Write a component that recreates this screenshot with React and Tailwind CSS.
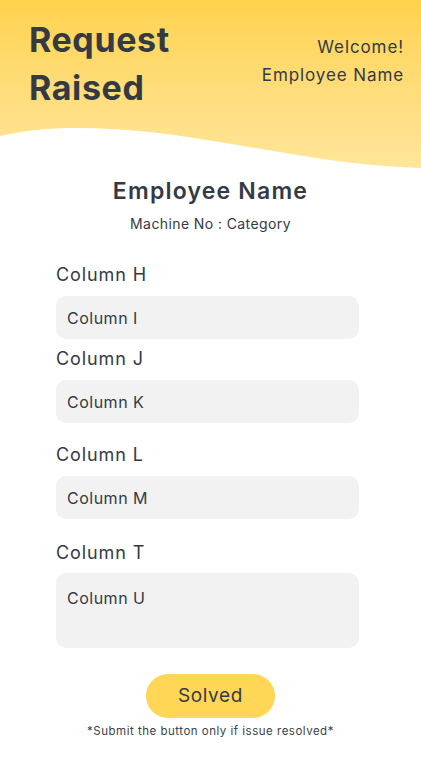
import React from 'react';

const fields = [
    { label: 'Column H', value: 'Column I', mt: 'mt-[28px]' },
    { label: 'Column J', value: 'Column K', mt: 'mt-[7px]' },
    { label: 'Column L', value: 'Column M', mt: 'mt-[19px]' },
];

const App = () => {
    return (
        <div className="min-h-screen w-full bg-white text-[#343a44]" style={{ fontFamily: 'Inter, "Noto Sans", sans-serif' }}>
            {/* Header */}
            <div className="relative h-[170px] bg-gradient-to-b from-[#ffd24c] to-[#ffe69b] overflow-hidden">
                <div className="flex justify-between items-start px-[29px] pt-[16px] pr-[17px]">
                    <h1 className="text-[34px] font-bold leading-[48px] tracking-[0.6px]">
                        Request<br />Raised
                    </h1>
                    <div className="text-right text-[17px] leading-[28px] mt-[17px] tracking-[0.9px]">
                        <p>Welcome!</p>
                        <p>Employee Name</p>
                    </div>
                </div>
                {/* wave */}
                <svg className="absolute bottom-0 left-0 w-full h-[50px]" viewBox="0 0 421 50" preserveAspectRatio="none">
                    <path d="M0 16 C 40 6, 90 6, 150 12 C 250 24, 330 46, 421 48 L421 50 L0 50 Z" fill="#ffffff" />
                </svg>
            </div>

            {/* Content */}
            <div className="flex flex-col items-center mt-[6px]">
                <h2 className="text-[23px] font-semibold leading-[30px] tracking-[1.2px]">Employee Name</h2>
                <p className="text-[14px] leading-[20px] mt-[8px] tracking-[0.4px]">Machine No : Category</p>
            </div>

            <div className="px-[56px] pr-[62px]">
                {fields.map((f) => (
                    <div key={f.label} className={f.mt}>
                        <p className="text-[18px] leading-[26px] tracking-[0.9px]">{f.label}</p>
                        <div className="mt-[8px] h-[43px] rounded-[10px] bg-[#f2f2f2] flex items-center px-[11px] text-[16px] tracking-[0.5px]">
                            {f.value}
                        </div>
                    </div>
                ))}
                <div className="mt-[21px]">
                    <p className="text-[18px] leading-[26px] tracking-[0.9px]">Column T</p>
                    <div className="mt-[7px] h-[75px] rounded-[10px] bg-[#f2f2f2] px-[11px] pt-[13px] text-[16px] tracking-[0.5px]">
                        Column U
                    </div>
                </div>
            </div>

            <div className="flex flex-col items-center mt-[26px]">
                <button className="w-[129px] h-[44px] rounded-full bg-[#ffd656] text-[19px] tracking-[0.6px]">Solved</button>
                <p className="text-[11.5px] leading-[16px] mt-[5px] text-[#3b3f47] tracking-[0.5px]">*Submit the button only if issue resolved*</p>
            </div>
        </div>
    );
};

export default App;
